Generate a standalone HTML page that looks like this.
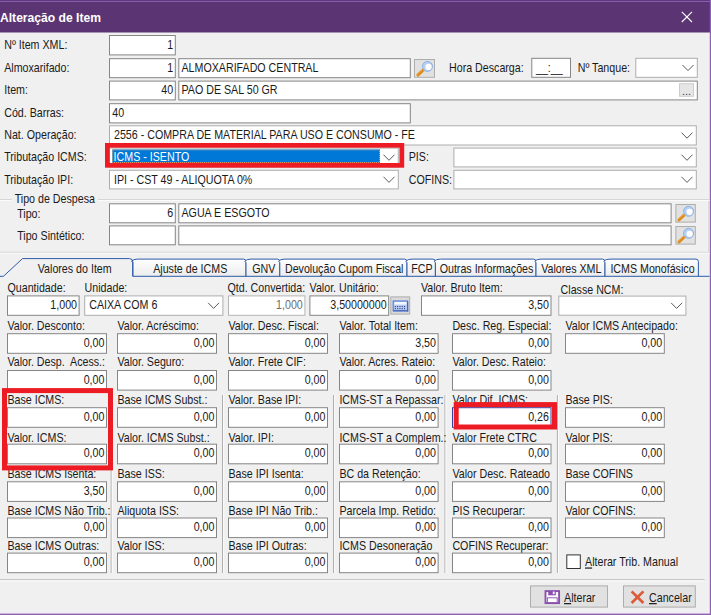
<!DOCTYPE html>
<html lang="pt-BR"><head><meta charset="utf-8"><title>Alteração de Item</title>
<style>html,body{margin:0;padding:0;background:#f0f0f0;overflow:hidden}svg{display:block}text{white-space:pre}</style></head>
<body>
<svg width="711" height="615" viewBox="0 0 711 615" font-family="'Liberation Sans', sans-serif" font-size="12">
<rect x="0.00" y="0.00" width="711.00" height="615.00" fill="#f0f0f0"/>
<rect x="0.00" y="0.00" width="711.00" height="32.50" fill="#5a3473"/>
<rect x="0.00" y="0.90" width="711.00" height="1.00" fill="#8e60b8"/>
<text transform="translate(0.00,22.00) scale(1.01,1)" font-size="12" font-weight="bold" fill="#fff">Alteração de Item</text>
<path d="M681.8 11.8 L692 22 M692 11.8 L681.8 22" stroke="#fff" stroke-width="1.1" fill="none"/>
<rect x="709.80" y="0.00" width="1.20" height="615.00" fill="#8e60b8"/>
<rect x="0.00" y="613.60" width="711.00" height="1.40" fill="#8e60b8"/>
<text transform="translate(4.20,48.70) scale(0.89,1)" font-size="12" fill="#1a1a1a">Nº Item XML:</text>
<rect x="109.50" y="35.50" width="65.80" height="19.40" fill="#fff" stroke="#858585" stroke-width="1"/>
<text transform="translate(173.20,48.70) scale(0.89,1)" font-size="12" text-anchor="end" fill="#1a1a1a">1</text>
<text transform="translate(4.20,71.80) scale(0.89,1)" font-size="12" fill="#1a1a1a">Almoxarifado:</text>
<rect x="109.50" y="58.70" width="65.80" height="19.00" fill="#fff" stroke="#858585" stroke-width="1"/>
<text transform="translate(173.20,71.90) scale(0.89,1)" font-size="12" text-anchor="end" fill="#1a1a1a">1</text>
<rect x="178.80" y="58.70" width="231.50" height="19.00" fill="#fff" stroke="#858585" stroke-width="1"/>
<text transform="translate(181.50,71.90) scale(0.89,1)" font-size="12" fill="#1a1a1a">ALMOXARIFADO CENTRAL</text>
<rect x="414.50" y="59.50" width="20.00" height="17.80" fill="#e1e1e1" stroke="#adadad" stroke-width="1"/>
<path d="M417.90 75.00 L423.30 70.00" stroke="#e89a2a" stroke-width="3.2" stroke-linecap="round"/>
<path d="M417.30 76.00 L422.90 71.00" stroke="#b0661a" stroke-width="0.8" opacity=".7"/>
<circle cx="427.50" cy="66.40" r="5" fill="#b4d0f4" stroke="#8fb0e4" stroke-width="1"/>
<circle cx="428.50" cy="66.90" r="3.1" fill="#fff"/>
<text transform="translate(449.00,71.80) scale(0.89,1)" font-size="12" fill="#1a1a1a">Hora Descarga:</text>
<rect x="531.80" y="58.30" width="38.70" height="19.00" fill="#fff" stroke="#858585" stroke-width="1"/>
<text transform="translate(536.00,71.50) scale(0.89,1)" font-size="12" fill="#1a1a1a">__:__</text>
<text transform="translate(577.70,71.80) scale(0.89,1)" font-size="12" fill="#1a1a1a">Nº Tanque:</text>
<rect x="635.80" y="58.30" width="61.50" height="19.00" fill="#fff" stroke="#adadad" stroke-width="1"/>
<path d="M682.50 65.00 L688.00 70.60 L693.50 65.00" fill="none" stroke="#5a5a5a" stroke-width="1"/>
<text transform="translate(4.20,94.20) scale(0.89,1)" font-size="12" fill="#1a1a1a">Item:</text>
<rect x="109.50" y="81.10" width="65.80" height="18.80" fill="#fff" stroke="#858585" stroke-width="1"/>
<text transform="translate(173.20,94.30) scale(0.89,1)" font-size="12" text-anchor="end" fill="#1a1a1a">40</text>
<rect x="178.80" y="81.10" width="518.50" height="18.80" fill="#fff" stroke="#858585" stroke-width="1"/>
<text transform="translate(181.50,94.30) scale(0.89,1)" font-size="12" fill="#1a1a1a">PAO DE SAL 50 GR</text>
<rect x="679.50" y="83.70" width="14.00" height="12.60" fill="#e6e6e6" stroke="#cdcdcd" stroke-width="1"/>
<text transform="translate(681.90,95.00) scale(1,1)" font-size="11" fill="#3c3c3c">...</text>
<text transform="translate(4.20,117.00) scale(0.89,1)" font-size="12" fill="#1a1a1a">Cód. Barras:</text>
<rect x="109.50" y="103.70" width="300.80" height="19.20" fill="#fff" stroke="#858585" stroke-width="1"/>
<text transform="translate(112.20,116.90) scale(0.89,1)" font-size="12" fill="#1a1a1a">40</text>
<text transform="translate(4.20,139.30) scale(0.89,1)" font-size="12" fill="#1a1a1a">Nat. Operação:</text>
<rect x="109.50" y="125.80" width="586.80" height="19.20" fill="#fff" stroke="#adadad" stroke-width="1"/>
<path d="M681.50 132.60 L687.00 138.20 L692.50 132.60" fill="none" stroke="#5a5a5a" stroke-width="1"/>
<text transform="translate(114.00,139.00) scale(0.89,1)" font-size="12" fill="#1a1a1a">2556 - COMPRA DE MATERIAL PARA USO E CONSUMO - FE</text>
<text transform="translate(4.20,161.30) scale(0.89,1)" font-size="12" fill="#1a1a1a">Tributação ICMS:</text>
<rect x="109.50" y="148.10" width="288.80" height="18.80" fill="#fff" stroke="#adadad" stroke-width="1"/>
<path d="M383.50 154.70 L389.00 160.30 L394.50 154.70" fill="none" stroke="#5a5a5a" stroke-width="1"/>
<rect x="112.20" y="149.40" width="267.80" height="13.60" fill="#0078d7"/>
<rect x="112.7" y="149.9" width="266.8" height="12.6" fill="none" stroke="#e8a060" stroke-width="1" stroke-dasharray="1 1"/>
<text transform="translate(113.60,160.80) scale(0.89,1)" font-size="12" fill="#fff">ICMS - ISENTO</text>
<text transform="translate(408.70,161.30) scale(0.89,1)" font-size="12" fill="#1a1a1a">PIS:</text>
<rect x="453.90" y="148.10" width="242.40" height="18.80" fill="#fff" stroke="#adadad" stroke-width="1"/>
<path d="M681.50 154.70 L687.00 160.30 L692.50 154.70" fill="none" stroke="#5a5a5a" stroke-width="1"/>
<text transform="translate(4.20,183.50) scale(0.89,1)" font-size="12" fill="#1a1a1a">Tributação IPI:</text>
<rect x="109.50" y="170.30" width="288.80" height="18.60" fill="#fff" stroke="#adadad" stroke-width="1"/>
<path d="M383.50 176.80 L389.00 182.40 L394.50 176.80" fill="none" stroke="#5a5a5a" stroke-width="1"/>
<text transform="translate(114.00,183.50) scale(0.89,1)" font-size="12" fill="#1a1a1a">IPI - CST 49 - ALIQUOTA 0%</text>
<text transform="translate(408.70,183.50) scale(0.89,1)" font-size="12" fill="#1a1a1a">COFINS:</text>
<rect x="453.90" y="170.30" width="242.40" height="18.60" fill="#fff" stroke="#adadad" stroke-width="1"/>
<path d="M681.50 176.80 L687.00 182.40 L692.50 176.80" fill="none" stroke="#5a5a5a" stroke-width="1"/>
<rect x="107.35" y="145.35" width="294.5" height="20" fill="none" stroke="#ed1c24" stroke-width="4.7"/>
<rect x="708.20" y="199.50" width="1.00" height="53.00" fill="#d8d8d8"/>
<rect x="0.00" y="199.00" width="12.00" height="1.00" fill="#d5d5d5"/>
<rect x="98.00" y="199.00" width="611.50" height="1.00" fill="#d5d5d5"/>
<rect x="0.00" y="200.00" width="12.00" height="1.00" fill="#fbfbfb"/>
<rect x="98.00" y="200.00" width="611.50" height="1.00" fill="#fbfbfb"/>
<text transform="translate(14.70,203.20) scale(0.89,1)" font-size="12" fill="#1a1a1a">Tipo de Despesa</text>
<text transform="translate(17.20,217.80) scale(0.89,1)" font-size="12" fill="#1a1a1a">Tipo:</text>
<rect x="109.50" y="203.80" width="65.80" height="19.00" fill="#fff" stroke="#858585" stroke-width="1"/>
<text transform="translate(173.20,217.00) scale(0.89,1)" font-size="12" text-anchor="end" fill="#1a1a1a">6</text>
<rect x="178.80" y="203.80" width="492.30" height="19.00" fill="#fff" stroke="#858585" stroke-width="1"/>
<text transform="translate(181.50,217.00) scale(0.89,1)" font-size="12" fill="#1a1a1a">AGUA E ESGOTO</text>
<rect x="675.90" y="204.50" width="19.40" height="17.60" fill="#e1e1e1" stroke="#adadad" stroke-width="1"/>
<path d="M679.00 219.90 L684.40 214.90" stroke="#e89a2a" stroke-width="3.2" stroke-linecap="round"/>
<path d="M678.40 220.90 L684.00 215.90" stroke="#b0661a" stroke-width="0.8" opacity=".7"/>
<circle cx="688.60" cy="211.30" r="5" fill="#b4d0f4" stroke="#8fb0e4" stroke-width="1"/>
<circle cx="689.60" cy="211.80" r="3.1" fill="#fff"/>
<text transform="translate(17.20,239.70) scale(0.89,1)" font-size="12" fill="#1a1a1a">Tipo Sintético:</text>
<rect x="109.50" y="225.90" width="65.80" height="18.90" fill="#fff" stroke="#858585" stroke-width="1"/>
<rect x="178.80" y="225.90" width="492.30" height="18.90" fill="#fff" stroke="#858585" stroke-width="1"/>
<rect x="675.90" y="226.50" width="19.40" height="17.60" fill="#e1e1e1" stroke="#adadad" stroke-width="1"/>
<path d="M679.00 241.90 L684.40 236.90" stroke="#e89a2a" stroke-width="3.2" stroke-linecap="round"/>
<path d="M678.40 242.90 L684.00 237.90" stroke="#b0661a" stroke-width="0.8" opacity=".7"/>
<circle cx="688.60" cy="233.30" r="5" fill="#b4d0f4" stroke="#8fb0e4" stroke-width="1"/>
<circle cx="689.60" cy="233.80" r="3.1" fill="#fff"/>
<rect x="0.00" y="251.80" width="709.50" height="1.00" fill="#d5d5d5"/>
<rect x="0.00" y="252.80" width="709.50" height="1.00" fill="#fbfbfb"/>
<defs><linearGradient id="tg" x1="0" y1="0" x2="0" y2="1"><stop offset="0" stop-color="#ffffff"/><stop offset="1" stop-color="#ececec"/></linearGradient></defs>
<path d="M132.80 276.3 L132.80 262.60 L131.60 261.20 Q133.40 259.10 137.80 259.10 L243.50 259.10 Q246.00 259.10 246.00 261.60 L246.00 276.3" fill="url(#tg)" stroke="#2c5aa8" stroke-width="1"/>
<text transform="translate(190.20,272.50) scale(0.89,1)" font-size="12" text-anchor="middle" fill="#1a1a1a">Ajuste de ICMS</text>
<path d="M246.00 276.3 L246.00 262.60 L244.80 261.20 Q246.60 259.10 251.00 259.10 L277.30 259.10 Q279.80 259.10 279.80 261.60 L279.80 276.3" fill="url(#tg)" stroke="#2c5aa8" stroke-width="1"/>
<text transform="translate(263.70,272.50) scale(0.89,1)" font-size="12" text-anchor="middle" fill="#1a1a1a">GNV</text>
<path d="M279.80 276.3 L279.80 262.60 L278.60 261.20 Q280.40 259.10 284.80 259.10 L404.50 259.10 Q407.00 259.10 407.00 261.60 L407.00 276.3" fill="url(#tg)" stroke="#2c5aa8" stroke-width="1"/>
<text transform="translate(344.20,272.50) scale(0.89,1)" font-size="12" text-anchor="middle" fill="#1a1a1a">Devolução Cupom Fiscal</text>
<path d="M407.00 276.3 L407.00 262.60 L405.80 261.20 Q407.60 259.10 412.00 259.10 L432.90 259.10 Q435.40 259.10 435.40 261.60 L435.40 276.3" fill="url(#tg)" stroke="#2c5aa8" stroke-width="1"/>
<text transform="translate(422.00,272.50) scale(0.89,1)" font-size="12" text-anchor="middle" fill="#1a1a1a">FCP</text>
<path d="M435.40 276.3 L435.40 262.60 L434.20 261.20 Q436.00 259.10 440.40 259.10 L533.50 259.10 Q536.00 259.10 536.00 261.60 L536.00 276.3" fill="url(#tg)" stroke="#2c5aa8" stroke-width="1"/>
<text transform="translate(486.50,272.50) scale(0.89,1)" font-size="12" text-anchor="middle" fill="#1a1a1a">Outras Informações</text>
<path d="M536.00 276.3 L536.00 262.60 L534.80 261.20 Q536.60 259.10 541.00 259.10 L602.50 259.10 Q605.00 259.10 605.00 261.60 L605.00 276.3" fill="url(#tg)" stroke="#2c5aa8" stroke-width="1"/>
<text transform="translate(571.30,272.50) scale(0.89,1)" font-size="12" text-anchor="middle" fill="#1a1a1a">Valores XML</text>
<path d="M605.00 276.3 L605.00 262.60 L603.80 261.20 Q605.60 259.10 610.00 259.10 L695.90 259.10 Q698.40 259.10 698.40 261.60 L698.40 276.3" fill="url(#tg)" stroke="#2c5aa8" stroke-width="1"/>
<text transform="translate(652.50,272.50) scale(0.89,1)" font-size="12" text-anchor="middle" fill="#1a1a1a">ICMS Monofásico</text>
<path d="M0 276.3 L3.4 276.3 L22.5 258.6 L129.5 258.6 Q132.8 258.6 132.8 262.0 L132.8 276.3 L709.5 276.3" fill="none" stroke="#2c5aa8" stroke-width="1"/>
<text transform="translate(74.70,272.60) scale(0.89,1)" font-size="12" text-anchor="middle" fill="#1a1a1a">Valores do Item</text>
<text transform="translate(7.50,292.40) scale(0.89,1)" font-size="12" fill="#1a1a1a">Quantidade:</text>
<rect x="7.50" y="295.90" width="71.60" height="19.40" fill="#fff" stroke="#858585" stroke-width="1"/>
<text transform="translate(77.00,309.10) scale(0.89,1)" font-size="12" text-anchor="end" fill="#1a1a1a">1,000</text>
<text transform="translate(84.60,292.40) scale(0.89,1)" font-size="12" fill="#1a1a1a">Unidade:</text>
<rect x="84.70" y="295.90" width="138.20" height="19.40" fill="#fff" stroke="#adadad" stroke-width="1"/>
<path d="M208.10 302.80 L213.60 308.40 L219.10 302.80" fill="none" stroke="#5a5a5a" stroke-width="1"/>
<text transform="translate(89.20,309.10) scale(0.89,1)" font-size="12" fill="#1a1a1a">CAIXA COM 6</text>
<text transform="translate(227.50,292.40) scale(0.89,1)" font-size="12" fill="#1a1a1a">Qtd. Convertida:</text>
<rect x="228.50" y="295.90" width="76.40" height="19.40" fill="#fff" stroke="#b4b4b4" stroke-width="1"/>
<text transform="translate(302.80,309.10) scale(0.89,1)" font-size="12" text-anchor="end" fill="#6d6d6d">1,000</text>
<text transform="translate(309.60,292.40) scale(0.89,1)" font-size="12" fill="#1a1a1a">Valor. Unitário:</text>
<rect x="309.90" y="295.90" width="78.80" height="19.40" fill="#fff" stroke="#858585" stroke-width="1"/>
<text transform="translate(386.60,309.10) scale(0.89,1)" font-size="12" text-anchor="end" fill="#1a1a1a">3,50000000</text>
<rect x="390.80" y="296.90" width="18.90" height="17.20" fill="#dadada" stroke="#adadad" stroke-width="1"/>
<rect x="393.20" y="301.00" width="14.40" height="9.80" fill="#b9cdf4" stroke="#5c82d6" stroke-width="1.2"/>
<rect x="407.00" y="301.40" width="1.20" height="10.00" fill="#4468c0"/>
<rect x="393.20" y="310.20" width="15.00" height="1.20" fill="#4468c0"/>
<rect x="394.40" y="302.00" width="12.00" height="2.60" fill="#f4f8ff"/>
<rect x="394.80" y="306.00" width="1.10" height="1.10" fill="#2b3f86"/>
<rect x="394.80" y="308.10" width="1.10" height="1.10" fill="#2b3f86"/>
<rect x="397.10" y="306.00" width="1.10" height="1.10" fill="#2b3f86"/>
<rect x="397.10" y="308.10" width="1.10" height="1.10" fill="#2b3f86"/>
<rect x="399.40" y="306.00" width="1.10" height="1.10" fill="#2b3f86"/>
<rect x="399.40" y="308.10" width="1.10" height="1.10" fill="#2b3f86"/>
<rect x="401.70" y="306.00" width="1.10" height="1.10" fill="#2b3f86"/>
<rect x="401.70" y="308.10" width="1.10" height="1.10" fill="#2b3f86"/>
<rect x="404.00" y="306.00" width="1.10" height="1.10" fill="#2b3f86"/>
<rect x="404.00" y="308.10" width="1.10" height="1.10" fill="#2b3f86"/>
<text transform="translate(421.00,292.40) scale(0.89,1)" font-size="12" fill="#1a1a1a">Valor. Bruto Item:</text>
<rect x="421.50" y="295.90" width="129.50" height="19.40" fill="#fff" stroke="#858585" stroke-width="1"/>
<text transform="translate(548.90,309.10) scale(0.89,1)" font-size="12" text-anchor="end" fill="#1a1a1a">3,50</text>
<text transform="translate(560.60,293.80) scale(0.89,1)" font-size="12" fill="#1a1a1a">Classe NCM:</text>
<rect x="558.80" y="296.10" width="127.10" height="19.10" fill="#fff" stroke="#adadad" stroke-width="1"/>
<path d="M671.10 302.85 L676.60 308.45 L682.10 302.85" fill="none" stroke="#5a5a5a" stroke-width="1"/>
<rect x="110.70" y="395.00" width="1.00" height="178.00" fill="#a8a8a8"/>
<rect x="111.70" y="395.00" width="1.00" height="178.00" fill="#fcfcfc"/>
<rect x="222.10" y="395.00" width="1.00" height="178.00" fill="#a8a8a8"/>
<rect x="223.10" y="395.00" width="1.00" height="178.00" fill="#fcfcfc"/>
<rect x="333.10" y="395.00" width="1.00" height="178.00" fill="#a8a8a8"/>
<rect x="334.10" y="395.00" width="1.00" height="178.00" fill="#fcfcfc"/>
<rect x="444.50" y="395.00" width="1.00" height="178.00" fill="#a8a8a8"/>
<rect x="445.50" y="395.00" width="1.00" height="178.00" fill="#fcfcfc"/>
<rect x="556.90" y="395.00" width="1.00" height="178.00" fill="#a8a8a8"/>
<rect x="557.90" y="395.00" width="1.00" height="178.00" fill="#fcfcfc"/>
<text transform="translate(7.40,330.20) scale(0.89,1)" font-size="12" fill="#1a1a1a">Valor. Desconto:</text>
<rect x="7.50" y="333.70" width="99.00" height="19.60" fill="#fff" stroke="#858585" stroke-width="1"/>
<text transform="translate(104.40,346.90) scale(0.89,1)" font-size="12" text-anchor="end" fill="#1a1a1a">0,00</text>
<text transform="translate(117.40,330.20) scale(0.89,1)" font-size="12" fill="#1a1a1a">Valor. Acréscimo:</text>
<rect x="117.50" y="333.70" width="99.00" height="19.60" fill="#fff" stroke="#858585" stroke-width="1"/>
<text transform="translate(214.40,346.90) scale(0.89,1)" font-size="12" text-anchor="end" fill="#1a1a1a">0,00</text>
<text transform="translate(228.40,330.20) scale(0.89,1)" font-size="12" fill="#1a1a1a">Valor. Desc. Fiscal:</text>
<rect x="228.50" y="333.70" width="99.00" height="19.60" fill="#fff" stroke="#858585" stroke-width="1"/>
<text transform="translate(325.40,346.90) scale(0.89,1)" font-size="12" text-anchor="end" fill="#1a1a1a">0,00</text>
<text transform="translate(339.40,330.20) scale(0.89,1)" font-size="12" fill="#1a1a1a">Valor. Total Item:</text>
<rect x="339.50" y="333.70" width="98.60" height="19.60" fill="#fff" stroke="#858585" stroke-width="1"/>
<text transform="translate(436.00,346.90) scale(0.89,1)" font-size="12" text-anchor="end" fill="#1a1a1a">3,50</text>
<text transform="translate(452.40,330.20) scale(0.89,1)" font-size="12" fill="#1a1a1a">Desc. Reg. Especial:</text>
<rect x="452.50" y="333.70" width="98.50" height="19.60" fill="#fff" stroke="#858585" stroke-width="1"/>
<text transform="translate(548.90,346.90) scale(0.89,1)" font-size="12" text-anchor="end" fill="#1a1a1a">0,00</text>
<text transform="translate(565.40,330.20) scale(0.89,1)" font-size="12" fill="#1a1a1a">Valor ICMS Antecipado:</text>
<rect x="565.50" y="333.70" width="98.80" height="19.60" fill="#fff" stroke="#858585" stroke-width="1"/>
<text transform="translate(662.20,346.90) scale(0.89,1)" font-size="12" text-anchor="end" fill="#1a1a1a">0,00</text>
<text transform="translate(7.40,366.40) scale(0.89,1)" font-size="12" fill="#1a1a1a">Valor. Desp.  Acess.:</text>
<rect x="7.50" y="370.50" width="99.00" height="19.60" fill="#fff" stroke="#858585" stroke-width="1"/>
<text transform="translate(104.40,383.70) scale(0.89,1)" font-size="12" text-anchor="end" fill="#1a1a1a">0,00</text>
<text transform="translate(117.40,366.40) scale(0.89,1)" font-size="12" fill="#1a1a1a">Valor. Seguro:</text>
<rect x="117.50" y="370.50" width="99.00" height="19.60" fill="#fff" stroke="#858585" stroke-width="1"/>
<text transform="translate(214.40,383.70) scale(0.89,1)" font-size="12" text-anchor="end" fill="#1a1a1a">0,00</text>
<text transform="translate(228.40,366.40) scale(0.89,1)" font-size="12" fill="#1a1a1a">Valor. Frete CIF:</text>
<rect x="228.50" y="370.50" width="99.00" height="19.60" fill="#fff" stroke="#858585" stroke-width="1"/>
<text transform="translate(325.40,383.70) scale(0.89,1)" font-size="12" text-anchor="end" fill="#1a1a1a">0,00</text>
<text transform="translate(339.40,366.40) scale(0.89,1)" font-size="12" fill="#1a1a1a">Valor. Acres. Rateio:</text>
<rect x="339.50" y="370.50" width="98.60" height="19.60" fill="#fff" stroke="#858585" stroke-width="1"/>
<text transform="translate(436.00,383.70) scale(0.89,1)" font-size="12" text-anchor="end" fill="#1a1a1a">0,00</text>
<text transform="translate(452.40,366.40) scale(0.89,1)" font-size="12" fill="#1a1a1a">Valor. Desc. Rateio:</text>
<rect x="452.50" y="370.50" width="98.50" height="19.60" fill="#fff" stroke="#858585" stroke-width="1"/>
<text transform="translate(548.90,383.70) scale(0.89,1)" font-size="12" text-anchor="end" fill="#1a1a1a">0,00</text>
<text transform="translate(7.40,403.80) scale(0.89,1)" font-size="12" fill="#1a1a1a">Base ICMS:</text>
<rect x="7.50" y="407.70" width="99.00" height="19.60" fill="#fff" stroke="#858585" stroke-width="1"/>
<text transform="translate(104.40,420.90) scale(0.89,1)" font-size="12" text-anchor="end" fill="#1a1a1a">0,00</text>
<text transform="translate(117.40,403.80) scale(0.89,1)" font-size="12" fill="#1a1a1a">Base ICMS Subst.:</text>
<rect x="117.50" y="407.70" width="99.00" height="19.60" fill="#fff" stroke="#858585" stroke-width="1"/>
<text transform="translate(214.40,420.90) scale(0.89,1)" font-size="12" text-anchor="end" fill="#1a1a1a">0,00</text>
<text transform="translate(228.40,403.80) scale(0.89,1)" font-size="12" fill="#1a1a1a">Valor. Base IPI:</text>
<rect x="228.50" y="407.70" width="99.00" height="19.60" fill="#fff" stroke="#858585" stroke-width="1"/>
<text transform="translate(325.40,420.90) scale(0.89,1)" font-size="12" text-anchor="end" fill="#1a1a1a">0,00</text>
<text transform="translate(339.40,403.80) scale(0.89,1)" font-size="12" fill="#1a1a1a">ICMS-ST a Repassar:</text>
<rect x="339.50" y="407.70" width="98.60" height="19.60" fill="#fff" stroke="#858585" stroke-width="1"/>
<text transform="translate(436.00,420.90) scale(0.89,1)" font-size="12" text-anchor="end" fill="#1a1a1a">0,00</text>
<text transform="translate(452.40,403.80) scale(0.89,1)" font-size="12" fill="#1a1a1a">Valor Dif. ICMS:</text>
<rect x="452.50" y="407.70" width="98.50" height="19.60" fill="#fff" stroke="#3a3f9a" stroke-width="1"/>
<text transform="translate(548.90,420.90) scale(0.89,1)" font-size="12" text-anchor="end" fill="#1a1a1a">0,26</text>
<text transform="translate(565.40,403.80) scale(0.89,1)" font-size="12" fill="#1a1a1a">Base PIS:</text>
<rect x="565.50" y="407.70" width="98.80" height="19.60" fill="#fff" stroke="#858585" stroke-width="1"/>
<text transform="translate(662.20,420.90) scale(0.89,1)" font-size="12" text-anchor="end" fill="#1a1a1a">0,00</text>
<text transform="translate(7.40,441.60) scale(0.89,1)" font-size="12" fill="#1a1a1a">Valor. ICMS:</text>
<rect x="7.50" y="444.20" width="99.00" height="19.60" fill="#fff" stroke="#858585" stroke-width="1"/>
<text transform="translate(104.40,457.40) scale(0.89,1)" font-size="12" text-anchor="end" fill="#1a1a1a">0,00</text>
<text transform="translate(117.40,441.60) scale(0.89,1)" font-size="12" fill="#1a1a1a">Valor. ICMS Subst.:</text>
<rect x="117.50" y="444.20" width="99.00" height="19.60" fill="#fff" stroke="#858585" stroke-width="1"/>
<text transform="translate(214.40,457.40) scale(0.89,1)" font-size="12" text-anchor="end" fill="#1a1a1a">0,00</text>
<text transform="translate(228.40,441.60) scale(0.89,1)" font-size="12" fill="#1a1a1a">Valor. IPI:</text>
<rect x="228.50" y="444.20" width="99.00" height="19.60" fill="#fff" stroke="#858585" stroke-width="1"/>
<text transform="translate(325.40,457.40) scale(0.89,1)" font-size="12" text-anchor="end" fill="#1a1a1a">0,00</text>
<text transform="translate(339.40,441.60) scale(0.89,1)" font-size="12" fill="#1a1a1a">ICMS-ST a Complem.:</text>
<rect x="339.50" y="444.20" width="98.60" height="19.60" fill="#fff" stroke="#858585" stroke-width="1"/>
<text transform="translate(436.00,457.40) scale(0.89,1)" font-size="12" text-anchor="end" fill="#1a1a1a">0,00</text>
<text transform="translate(452.40,441.60) scale(0.89,1)" font-size="12" fill="#1a1a1a">Valor Frete CTRC</text>
<rect x="452.50" y="444.20" width="98.50" height="19.60" fill="#fff" stroke="#858585" stroke-width="1"/>
<text transform="translate(548.90,457.40) scale(0.89,1)" font-size="12" text-anchor="end" fill="#1a1a1a">0,00</text>
<text transform="translate(565.40,441.60) scale(0.89,1)" font-size="12" fill="#1a1a1a">Valor PIS:</text>
<rect x="565.50" y="444.20" width="98.80" height="19.60" fill="#fff" stroke="#858585" stroke-width="1"/>
<text transform="translate(662.20,457.40) scale(0.89,1)" font-size="12" text-anchor="end" fill="#1a1a1a">0,00</text>
<text transform="translate(7.40,478.10) scale(0.89,1)" font-size="12" fill="#1a1a1a">Base ICMS Isenta:</text>
<rect x="7.50" y="481.80" width="99.00" height="19.60" fill="#fff" stroke="#858585" stroke-width="1"/>
<text transform="translate(104.40,495.00) scale(0.89,1)" font-size="12" text-anchor="end" fill="#1a1a1a">3,50</text>
<text transform="translate(117.40,478.10) scale(0.89,1)" font-size="12" fill="#1a1a1a">Base ISS:</text>
<rect x="117.50" y="481.80" width="99.00" height="19.60" fill="#fff" stroke="#858585" stroke-width="1"/>
<text transform="translate(214.40,495.00) scale(0.89,1)" font-size="12" text-anchor="end" fill="#1a1a1a">0,00</text>
<text transform="translate(228.40,478.10) scale(0.89,1)" font-size="12" fill="#1a1a1a">Base IPI Isenta:</text>
<rect x="228.50" y="481.80" width="99.00" height="19.60" fill="#fff" stroke="#858585" stroke-width="1"/>
<text transform="translate(325.40,495.00) scale(0.89,1)" font-size="12" text-anchor="end" fill="#1a1a1a">0,00</text>
<text transform="translate(339.40,478.10) scale(0.89,1)" font-size="12" fill="#1a1a1a">BC da Retenção:</text>
<rect x="339.50" y="481.80" width="98.60" height="19.60" fill="#fff" stroke="#858585" stroke-width="1"/>
<text transform="translate(436.00,495.00) scale(0.89,1)" font-size="12" text-anchor="end" fill="#1a1a1a">0,00</text>
<text transform="translate(452.40,478.10) scale(0.89,1)" font-size="12" fill="#1a1a1a">Valor Desc. Rateado</text>
<rect x="452.50" y="481.80" width="98.50" height="19.60" fill="#fff" stroke="#858585" stroke-width="1"/>
<text transform="translate(548.90,495.00) scale(0.89,1)" font-size="12" text-anchor="end" fill="#1a1a1a">0,00</text>
<text transform="translate(565.40,478.10) scale(0.89,1)" font-size="12" fill="#1a1a1a">Base COFINS</text>
<rect x="565.50" y="481.80" width="98.80" height="19.60" fill="#fff" stroke="#858585" stroke-width="1"/>
<text transform="translate(662.20,495.00) scale(0.89,1)" font-size="12" text-anchor="end" fill="#1a1a1a">0,00</text>
<text transform="translate(7.40,514.80) scale(0.89,1)" font-size="12" fill="#1a1a1a">Base ICMS Não Trib.:</text>
<rect x="7.50" y="518.00" width="99.00" height="19.60" fill="#fff" stroke="#858585" stroke-width="1"/>
<text transform="translate(104.40,531.20) scale(0.89,1)" font-size="12" text-anchor="end" fill="#1a1a1a">0,00</text>
<text transform="translate(117.40,514.80) scale(0.89,1)" font-size="12" fill="#1a1a1a">Aliquota ISS:</text>
<rect x="117.50" y="518.00" width="99.00" height="19.60" fill="#fff" stroke="#858585" stroke-width="1"/>
<text transform="translate(214.40,531.20) scale(0.89,1)" font-size="12" text-anchor="end" fill="#1a1a1a">0,00</text>
<text transform="translate(228.40,514.80) scale(0.89,1)" font-size="12" fill="#1a1a1a">Base IPI Não Trib.:</text>
<rect x="228.50" y="518.00" width="99.00" height="19.60" fill="#fff" stroke="#858585" stroke-width="1"/>
<text transform="translate(325.40,531.20) scale(0.89,1)" font-size="12" text-anchor="end" fill="#1a1a1a">0,00</text>
<text transform="translate(339.40,514.80) scale(0.89,1)" font-size="12" fill="#1a1a1a">Parcela Imp. Retido:</text>
<rect x="339.50" y="518.00" width="98.60" height="19.60" fill="#fff" stroke="#858585" stroke-width="1"/>
<text transform="translate(436.00,531.20) scale(0.89,1)" font-size="12" text-anchor="end" fill="#1a1a1a">0,00</text>
<text transform="translate(452.40,514.80) scale(0.89,1)" font-size="12" fill="#1a1a1a">PIS Recuperar:</text>
<rect x="452.50" y="518.00" width="98.50" height="19.60" fill="#fff" stroke="#858585" stroke-width="1"/>
<text transform="translate(548.90,531.20) scale(0.89,1)" font-size="12" text-anchor="end" fill="#1a1a1a">0,00</text>
<text transform="translate(565.40,514.80) scale(0.89,1)" font-size="12" fill="#1a1a1a">Valor COFINS:</text>
<rect x="565.50" y="518.00" width="98.80" height="19.60" fill="#fff" stroke="#858585" stroke-width="1"/>
<text transform="translate(662.20,531.20) scale(0.89,1)" font-size="12" text-anchor="end" fill="#1a1a1a">0,00</text>
<text transform="translate(7.40,550.10) scale(0.89,1)" font-size="12" fill="#1a1a1a">Base ICMS Outras:</text>
<rect x="7.50" y="553.10" width="99.00" height="19.60" fill="#fff" stroke="#858585" stroke-width="1"/>
<text transform="translate(104.40,566.30) scale(0.89,1)" font-size="12" text-anchor="end" fill="#1a1a1a">0,00</text>
<text transform="translate(117.40,550.10) scale(0.89,1)" font-size="12" fill="#1a1a1a">Valor ISS:</text>
<rect x="117.50" y="553.10" width="99.00" height="19.60" fill="#fff" stroke="#858585" stroke-width="1"/>
<text transform="translate(214.40,566.30) scale(0.89,1)" font-size="12" text-anchor="end" fill="#1a1a1a">0,00</text>
<text transform="translate(228.40,550.10) scale(0.89,1)" font-size="12" fill="#1a1a1a">Base IPI Outras:</text>
<rect x="228.50" y="553.10" width="99.00" height="19.60" fill="#fff" stroke="#858585" stroke-width="1"/>
<text transform="translate(325.40,566.30) scale(0.89,1)" font-size="12" text-anchor="end" fill="#1a1a1a">0,00</text>
<text transform="translate(339.40,550.10) scale(0.89,1)" font-size="12" fill="#1a1a1a">ICMS Desoneração</text>
<rect x="339.50" y="553.10" width="98.60" height="19.60" fill="#fff" stroke="#858585" stroke-width="1"/>
<text transform="translate(436.00,566.30) scale(0.89,1)" font-size="12" text-anchor="end" fill="#1a1a1a">0,00</text>
<text transform="translate(452.40,550.10) scale(0.89,1)" font-size="12" fill="#1a1a1a">COFINS Recuperar:</text>
<rect x="452.50" y="553.10" width="98.50" height="19.60" fill="#fff" stroke="#858585" stroke-width="1"/>
<text transform="translate(548.90,566.30) scale(0.89,1)" font-size="12" text-anchor="end" fill="#1a1a1a">0,00</text>
<rect x="566.80" y="554.90" width="13.50" height="13.60" fill="#fff" stroke="#333" stroke-width="1"/>
<text transform="translate(585.00,566.40) scale(0.89,1)" font-size="12" fill="#1a1a1a"><tspan text-decoration="underline">A</tspan>lterar Trib. Manual</text>
<rect x="4.5" y="390.6" width="106" height="77.3" fill="none" stroke="#ed1c24" stroke-width="5"/>
<rect x="456.2" y="404.6" width="98.3" height="22.4" fill="none" stroke="#ed1c24" stroke-width="5"/>
<rect x="0.00" y="579.30" width="704.50" height="1.00" fill="#b4b4b4"/>
<rect x="0.00" y="580.30" width="704.50" height="1.00" fill="#fff"/>
<rect x="530.50" y="585.90" width="77.00" height="21.20" fill="#e1e1e1" stroke="#adadad" stroke-width="1"/>
<rect x="623.50" y="585.90" width="71.80" height="21.20" fill="#e1e1e1" stroke="#adadad" stroke-width="1"/>
<g transform="translate(544.8,590.4)"><rect x="0.7" y="0.7" width="13.6" height="12" fill="#fff" stroke="#8a4fb0" stroke-width="1.9"/><rect x="3.4" y="0.7" width="7.6" height="4.2" fill="#8a4fb0"/><rect x="8" y="1.2" width="1.8" height="2.6" fill="#fff"/><rect x="2.6" y="7.4" width="9.8" height="4.8" fill="#fff" stroke="#8a4fb0" stroke-width="0.9"/></g>
<text transform="translate(564.00,602.00) scale(0.89,1)" font-size="12" fill="#1a1a1a"><tspan text-decoration="underline">A</tspan>lterar</text>
<path d="M631.6 591.4 L643.4 603 M643.4 591.4 L631.6 603" stroke="#dc5a38" stroke-width="2.7" fill="none"/>
<text transform="translate(649.00,602.00) scale(0.89,1)" font-size="12" fill="#1a1a1a"><tspan text-decoration="underline">C</tspan>ancelar</text>
</svg>
</body></html>
